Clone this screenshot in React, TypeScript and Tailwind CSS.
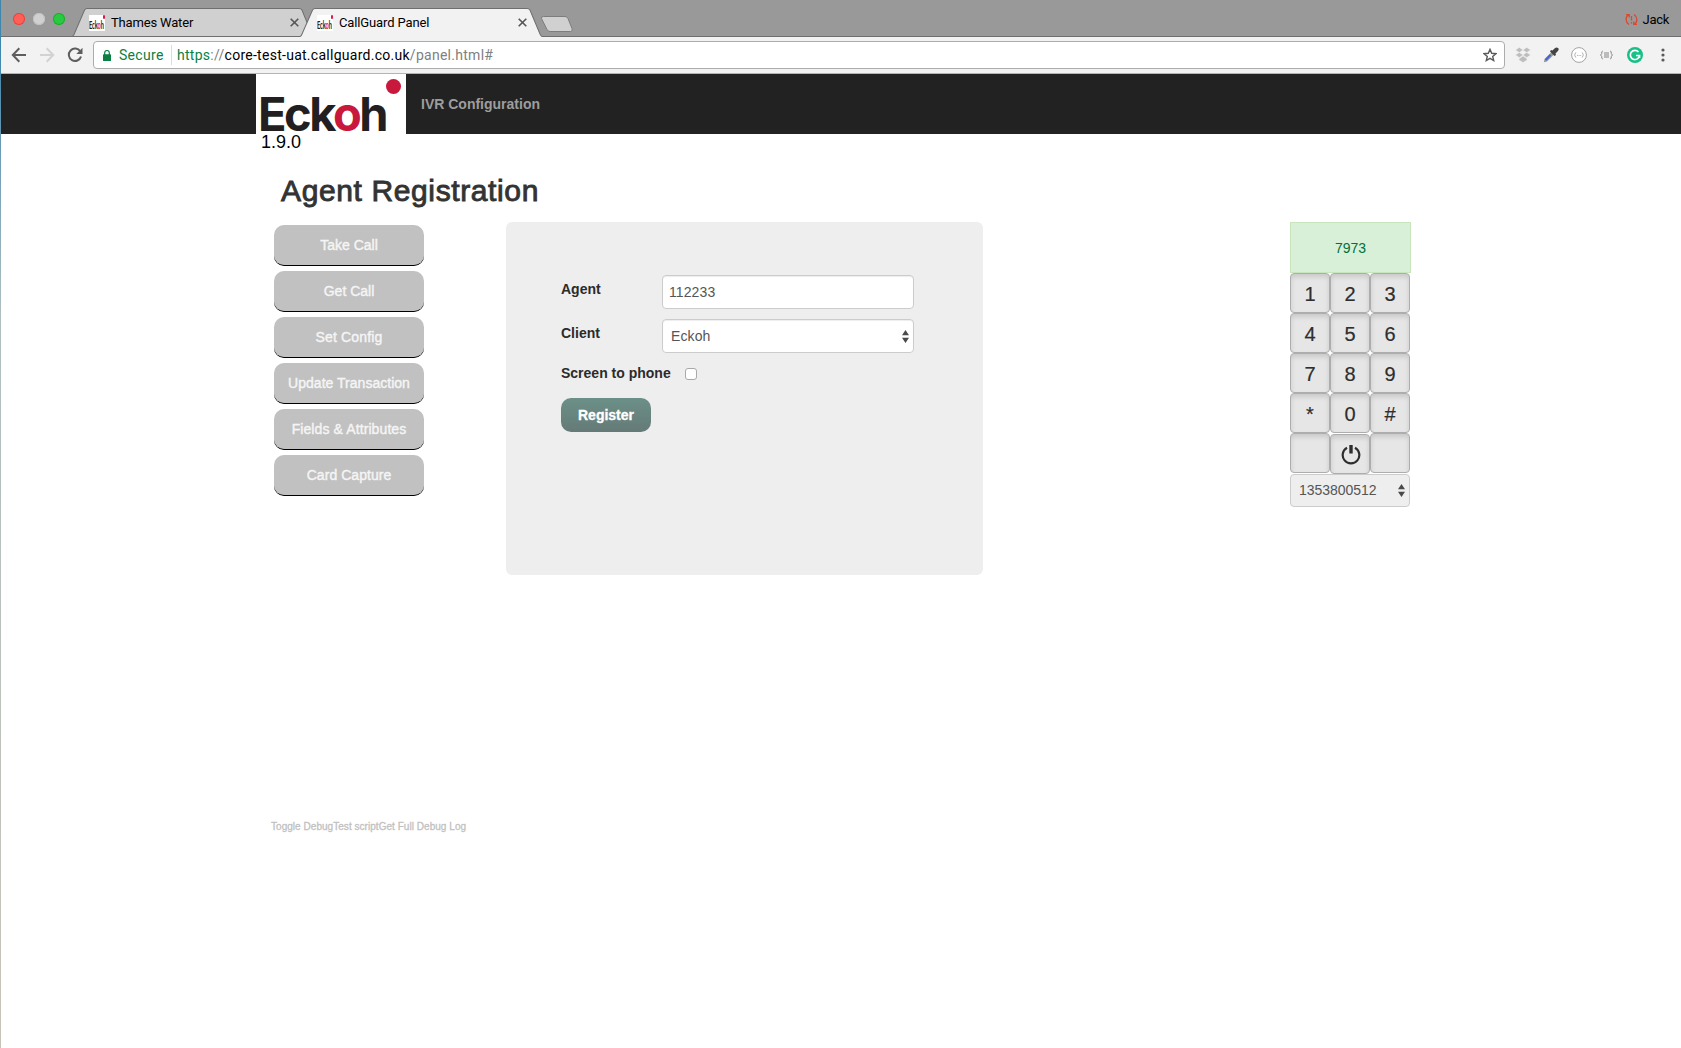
import React from "react";
import { clsx } from "clsx";

const HELV = "font-['Liberation_Sans',sans-serif]";

function Favicon() {
  return (
    <span className="relative flex h-[16px] w-[16px] items-end overflow-hidden bg-white font-['Lato',sans-serif] text-[12px] font-bold leading-[12px] text-[#222]">
      <span className="flex origin-left scale-x-[0.47] tracking-[-0.2px]">
        Eck<span className="text-[#d8174a]">o</span>h
      </span>
      <span className="absolute right-0 top-0 h-[4px] w-[2px] rounded-full bg-[#e0174a]" />
    </span>
  );
}

function Cross() {
  return (
    <svg width="9" height="9" viewBox="0 0 9 9" stroke="#555" strokeWidth="1.6">
      <path d="M.7 .7 8.3 8.3M8.3 .7 .7 8.3" />
    </svg>
  );
}

function Tab({ title, active, className, titleClass }: { title: string; active?: boolean; className: string; titleClass: string }) {
  return (
    <div className={clsx("relative flex h-[29px] shrink-0 items-center pl-[17px] pr-[15px]", className)}>
      <svg className="absolute left-0 top-0 h-full w-full" viewBox="0 0 241 29" preserveAspectRatio="none">
        <path
          d={active ? "M0 29V28.5C1 28 1.500 27 2 26L12.500 2Q13.500 .5 15 .5H226Q228 .5 229 2L239 26Q240 28 241 28.500V29Z" : "M0 28.500C1 28 1.500 27.500 2 26.500L12.500 2Q13.500 .5 15 .5H226Q228 .5 229 2L239 26.500Q240 28.500 241 28.500Z"}
          fill={active ? "#f2f2f2" : "#d0d0d0"}
          stroke={active ? "none" : "#6f6f6f"}
        />
        {active && <path d="M0 28.500C1 28 1.500 27.500 2 26L12.500 2Q13.500 .5 15 .5H226Q228 .5 229 2L239 26Q240 28 241 28.500" fill="none" stroke="#6f6f6f" />}
      </svg>
      <div className="relative flex w-full items-center">
        <Favicon />
        <span className={clsx("ml-[6px] whitespace-nowrap font-['Roboto',sans-serif] text-[13px] leading-[16px] text-black", titleClass)}>{title}</span>
        <span className="ml-auto"><Cross /></span>
      </div>
    </div>
  );
}

function TabStrip() {
  return (
    <div className="relative h-[37px] bg-[#999] shadow-[inset_0_-1px_0_#6f6f6f]">
      <div className="flex h-[37px] items-start pl-[12px]">
        <div className="flex gap-[8px] pt-[13px]">
          <span className="h-[12px] w-[12px] rounded-full bg-[#ff5f57] ring-1 ring-inset ring-[#e2463f]" />
          <span className="h-[12px] w-[12px] rounded-full bg-[#d1d1d1] ring-1 ring-inset ring-[#c1c1c1]" />
          <span className="h-[12px] w-[12px] rounded-full bg-[#28ca41] ring-1 ring-inset ring-[#1dad2b]" />
        </div>
        <div className="flex pl-[7px] pt-[8px]">
          <Tab title="Thames Water" className="w-[242px]" titleClass="tracking-[-0.17px]" />
          <Tab title="CallGuard Panel" active className="-ml-[14px] w-[242px]" titleClass="tracking-[-0.13px]" />
        </div>
        <svg className="-ml-[2px] mt-[15px]" width="34" height="18" viewBox="0 0 34 18">
          <path d="M3.500 1.500H25Q27 1.500 28 3.500L32 13.500Q33 16.500 30.500 16.500H10Q8 16.500 7 14.500L1.500 3.500Q1 1.500 3.500 1.500Z" fill="#d0d0d0" stroke="#7d7d7d" />
        </svg>
        <div className="ml-auto flex items-center pr-[12px] pt-[11px]">
          <svg width="13" height="13" viewBox="0 0 13 13" fill="none" stroke="#d64a32" strokeWidth="1.300">
            <path d="M4 11.500C.2 9 .2 4 3.600 1.800M9 1.500C12.800 4 12.800 9 9.400 11.200M1 1.700H4.200V4.500M12 11.300H8.800V8.500M6.500 3V7.500M6.500 9V10.400" />
          </svg>
          <span className="ml-[5px] font-['Roboto',sans-serif] text-[13px] leading-[17px] tracking-[-0.3px] text-black">Jack</span>
        </div>
      </div>
    </div>
  );
}

function Toolbar() {
  return (
    <div className="flex h-[37px] items-center border-b border-[#b4b4b4] bg-[#f2f2f2] pl-[10px]">
      <svg width="16" height="16" viewBox="0 0 16 16" fill="none" stroke="#5e5e5e" strokeWidth="2"><path d="M15 8H2M8.300 1.300 1.800 8l6.500 6.700" /></svg>
      <svg className="ml-[12px]" width="16" height="16" viewBox="0 0 16 16" fill="none" stroke="#d2d2d2" strokeWidth="2"><path d="M1 8H14M7.700 1.300 14.200 8l-6.500 6.700" /></svg>
      <svg className="ml-[12px]" width="16" height="16" viewBox="0 0 16 16" fill="none" stroke="#5e5e5e" strokeWidth="2"><path d="M13.300 4.500A6.200 6.200 0 1 0 14 9.500" /><path d="M15.500 .8V7H9.300Z" fill="#5e5e5e" stroke="none" /></svg>
      <div className="ml-[10px] flex h-[28px] w-[1412px] items-center rounded-[4px] border border-[#acacac] bg-white pl-[9px] pr-[7px] font-['Roboto',sans-serif] text-[14px] leading-[18px]">
        <svg width="8" height="11" viewBox="0 0 8 11"><rect y="4.300" width="8" height="6.700" rx=".6" fill="#0b8043" /><path d="M1.700 5V2.800a2.300 2.300 0 0 1 4.600 0V5" fill="none" stroke="#0b8043" strokeWidth="1.200" /></svg>
        <span className="ml-[8px] w-[52px] tracking-[0.3px] text-[#0b8043]">Secure</span>
        <span className="h-[20px] w-px bg-[#ddd]" />
        <span className="ml-[5px] whitespace-nowrap tracking-[0.27px] text-black">
          <span className="text-[#0b8043]">https</span><span className="text-[#808080]">://</span>core-test-uat.callguard.co.uk<span className="text-[#808080]">/panel.html#</span>
        </span>
        <svg className="ml-auto" width="14" height="14" viewBox="0 0 14 14" fill="none" stroke="#5a5a5a" strokeWidth="1.400"><path d="M7 1.400 8.700 5.300l4.200.4-3.200 2.700 1 4.100L7 10.300l-3.700 2.200 1-4.100L1.100 5.700l4.200-.4Z" /></svg>
      </div>
      <svg className="ml-[10px]" width="16" height="16" viewBox="0 0 16 16" fill="#bdbdbd"><path d="M4.300 .5 8 3 4.300 5.500 .5 3ZM11.700 .5 15.500 3 11.700 5.500 8 3ZM4.300 5.500 8 8 4.300 10.500 .5 8ZM11.700 5.500 15.500 8 11.700 10.500 8 8ZM8 9 12 11.800V13L8 15.500 4 13V11.800L4.500 11.500Z" stroke="#f2f2f2" strokeWidth=".4" /></svg>
      <svg className="ml-[12px]" width="16" height="16" viewBox="0 0 16 16"><path d="M9 4.500 1.500 12 .8 15.200 4 14.500 11.500 7Z" fill="#9a9a9a" /><path d="M7.500 8 2.500 13" stroke="#3f63d8" strokeWidth="2" /><path d="M10.500 2.500Q13-.5 15 1T13.500 5.500L12.500 6.500 13 8 11.500 9 7 4.500 8 3 9.500 3.500Z" fill="#444" /></svg>
      <svg className="ml-[12px]" width="16" height="16" viewBox="0 0 16 16" fill="none" stroke="#a3a3a3"><circle cx="8" cy="8" r="7.400" fill="#fff" /><path d="M5.200 5.500Q4.200 5.500 4.200 7L3.500 8 4.200 9Q4.200 10.500 5.200 10.500M10.800 5.500Q11.800 5.500 11.800 7L12.500 8 11.800 9Q11.800 10.500 10.800 10.500" strokeWidth=".8" /><path d="M6 8.500H10.200" strokeDasharray="1 .6" strokeWidth=".8" /></svg>
      <svg className="ml-[13px]" width="13" height="10" viewBox="0 0 13 10" fill="none" stroke="#858585"><path d="M2.800 1Q1.500 1 1.700 3.500L.6 5 1.700 6.500Q1.500 9 2.800 9M10.200 1Q11.500 1 11.300 3.500L12.400 5 11.300 6.500Q11.500 9 10.200 9M4 3H9M4 5H9M4 7H9" /></svg>
      <svg className="ml-[14px]" width="16" height="16" viewBox="0 0 16 16"><circle cx="8" cy="8" r="8" fill="#16c087" /><path d="M11.500 5A4.600 4.600 0 1 0 12.500 8.500H9M12.500 8.500V11" fill="none" stroke="#fff" strokeWidth="1.700" /></svg>
      <svg className="ml-[18px]" width="4" height="14" viewBox="0 0 4 14" fill="#5a5a5a"><circle cx="2" cy="2" r="1.600" /><circle cx="2" cy="7" r="1.600" /><circle cx="2" cy="12" r="1.600" /></svg>
    </div>
  );
}

function Logo() {
  return (
    <div className="relative h-[60px] w-[150px] bg-white">
      <div className="absolute left-0 top-[22px] whitespace-nowrap pl-[2px] font-['Inter',sans-serif] text-[47px] font-bold leading-[36px] tracking-[-2.5px] text-[#231f20]">
        Eck<span className="text-[#c8193c]">o</span>h
      </div>
      <span className="absolute left-[130px] top-[5px] h-[15px] w-[15px] rounded-full bg-[#c8193c]" />
    </div>
  );
}

function Arrows() {
  return (
    <svg width="7" height="13" viewBox="0 0 7 13" fill="#4a4a4a"><path d="M0 5.200 3.500 0 7 5.200ZM0 7.800 3.500 13 7 7.800Z" /></svg>
  );
}

const actions = [
  ["Take Call", "tracking-[0px]"],
  ["Get Call", "tracking-[0px]"],
  ["Set Config", "tracking-[0.15px]"],
  ["Update Transaction", "tracking-[0.02px]"],
  ["Fields & Attributes", "tracking-[0.1px]"],
  ["Card Capture", "tracking-[0.05px]"],
];

function Sidebar() {
  return (
    <div className="mt-[3px] flex w-[150px] flex-col gap-[5px]">
      {actions.map(([label, track]) => (
        <button key={label} className={clsx("h-[41px] rounded-[10px] border-b border-black bg-[#c1c1c1] text-[14px] leading-[20px] text-[#f5f5f5] [-webkit-text-stroke:0.4px_#f5f5f5]", track)}>
          {label}
        </button>
      ))}
    </div>
  );
}

const field = "flex h-[34px] w-[252px] items-center rounded-[4px] border border-[#ccc] bg-white text-[14px] text-[#555] shadow-[inset_0_1px_1px_rgba(0,0,0,0.075)]";

function RegistrationForm() {
  return (
    <div className="ml-[82px] h-[353px] w-[477px] rounded-[6px] bg-[#eee] pl-[55px] pt-[53px] text-[14px] font-bold leading-[20px] text-[#2b2b2b]">
      <div className="flex h-[44px]">
        <span className="w-[101px] pt-[4px]">Agent</span>
        <div className={clsx(field, "pl-[6px] font-normal tracking-[0.1px]")}>112233</div>
      </div>
      <div className="flex h-[44px]">
        <span className="w-[101px] pt-[4px]">Client</span>
        <div className={clsx(field, "justify-between pl-[8px] pr-[4px] font-normal tracking-[0.1px]")}>Eckoh<Arrows /></div>
      </div>
      <div className="flex h-[35px] items-start">
        <span className="w-[124px] whitespace-nowrap">Screen to phone</span>
        <span className="mt-[5px] h-[12px] w-[12px] rounded-[3px] border border-[#a9a9a9] bg-white" />
      </div>
      <button className="h-[34px] w-[90px] rounded-[10px] bg-linear-to-b from-[#6b9088] to-[#657a77] text-[14px] font-bold text-white [-webkit-text-stroke:0.3px_white]">Register</button>
    </div>
  );
}

const keys = ["1", "2", "3", "4", "5", "6", "7", "8", "9", "*", "0", "#", "", "power", " "];

function Keypad() {
  return (
    <div className="ml-[307px] w-[121px]">
      <div className="flex h-[51px] items-center justify-center border border-[#c8e5bc] bg-[#d8f0d8] pt-[2px] text-[14px] text-[#00703c]">7973</div>
      <div className="grid w-[120px] grid-cols-3">
        {keys.map((k) => (
          <button key={k} className={clsx("flex h-[40px] items-center justify-center rounded-[4px] border border-[#adadad] bg-[#e6e6e6] pt-[2px] text-[20px] leading-[26px] text-[#2e2e2e] shadow-[inset_0_3px_5px_rgba(0,0,0,0.125)] [-webkit-text-stroke:0.2px_#2e2e2e]", k === "power" && "mt-px")}>
            {k === "power" ? (
              <svg className="ml-[1px]" width="20" height="20" viewBox="0 0 20 20" fill="none" stroke="#2e2e2e" strokeWidth="2.200"><path d="M6 2.800A8.300 8.300 0 1 0 14 2.800" /><path d="M10 0V8.500" strokeWidth="3.400" /></svg>
            ) : k}
          </button>
        ))}
      </div>
      <div className="flex h-[33px] w-[120px] items-center justify-between rounded-[4px] border border-[#ccc] bg-[#eee] pl-[8px] pr-[4px] text-[14px] tracking-[-0.05px] text-[#555]">
        1353800512<Arrows />
      </div>
    </div>
  );
}

export default function App() {
  return (
    <div className={clsx("flex h-[1048px] w-[1681px] overflow-hidden bg-white", HELV)}>
      <div className="w-px shrink-0 bg-linear-to-b from-[#3f86ad] from-5% via-[#aebfc0] via-30% to-[#c9c4b8]" />
      <div className="w-[1680px]">
        <TabStrip />
        <Toolbar />
        <nav className="flex h-[60px] bg-[#222] pl-[255px]">
          <Logo />
          <span className="pl-[15px] pt-[20px] text-[14px] font-bold leading-[20px] text-[#9d9d9d]">IVR Configuration</span>
        </nav>
        <main className="pl-[255px]">
          <div className="h-[16px] pl-[5px] text-[18px] leading-[16px] text-black">1.9.0</div>
          <h1 className="mt-[24px] h-[48px] pl-[25px] text-[30px] leading-[34px] tracking-[0.62px] text-[#333] [-webkit-text-stroke:0.9px_#333]">Agent Registration</h1>
          <div className="flex items-start pl-[18px]">
            <Sidebar />
            <RegistrationForm />
            <Keypad />
          </div>
          <div className="mt-[242px] flex pl-[15px] text-[10px] leading-[20px] tracking-[0.04px] text-[#c1c1c1] [-webkit-text-stroke:0.3px_#c1c1c1]">
            <a>Toggle Debug</a><a>Test script</a><a>Get Full Debug Log</a>
          </div>
        </main>
      </div>
    </div>
  );
}
